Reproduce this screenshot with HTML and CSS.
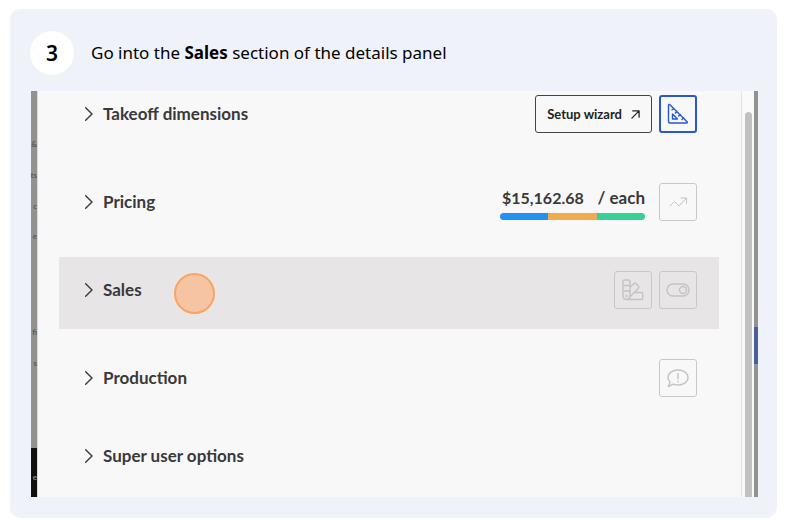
FILE: index.html
```html
<!DOCTYPE html>
<html lang="en">
<head>
<meta charset="utf-8">
<meta name="viewport" content="width=device-width, initial-scale=1">
<title>Step 3</title>
<link rel="stylesheet" href="styles.css">
</head>
<body>
<article class="step">
  <header class="step-head">
    <span class="step-number">3</span>
    <p class="step-text">Go into the <strong>Sales</strong> section of the details panel</p>
  </header>
  <div class="shot">
    <div class="backdrop-left">
      <span class="bit bit-1">&amp;</span>
      <span class="bit bit-2">ts</span>
      <span class="bit bit-3">c</span>
      <span class="bit bit-4">e</span>
      <span class="bit bit-5">fi</span>
      <span class="bit bit-6">s</span>
      <span class="bit bit-7">e</span>
    </div>
    <div class="panel">
      <section class="row">
        <button class="toggle"><svg class="chevron" viewBox="0 0 8 14"><path d="M.7.7 7 7 .7 13.3"/></svg>Takeoff dimensions</button>
        <div class="actions">
          <button class="wizard">Setup wizard <svg class="arrow" viewBox="0 0 10 10"><path d="M1 9 9 1M2 1h7v7"/></svg></button>
          <button class="icon-button active" aria-label="Dimensions">
            <svg viewBox="0 0 24 24"><path d="M2.500 3.800v15.400q0 1.800 1.800 1.800h15.900q2 0 .6-1.500L4.200 2.900Q2.500 1.500 2.500 3.800ZM6.500 12v5h5ZM7.600 6.200 6 7.800M11 9.300l-1.600 1.600M14.300 12.500l-1.600 1.600M17.600 15.800 16 17.400"/></svg>
          </button>
        </div>
      </section>
      <section class="row">
        <button class="toggle"><svg class="chevron" viewBox="0 0 8 14"><path d="M.7.7 7 7 .7 13.3"/></svg>Pricing</button>
        <div class="actions priced">
          <div class="price">
            <div class="price-text"><span>$15,162.68</span><span class="unit">/ each</span></div>
            <div class="price-bar"><i class="cost"></i><i class="markup"></i><i class="margin"></i></div>
          </div>
          <button class="icon-button" aria-label="Price trend">
            <svg class="thin" viewBox="0 0 24 24"><path d="m4 16 4.500-4.500 4.500 4.500 7.500-8M15 8h5.500v5.500"/></svg>
          </button>
        </div>
      </section>
      <section class="row selected">
        <button class="toggle"><svg class="chevron" viewBox="0 0 8 14"><path d="M.7.7 7 7 .7 13.3"/></svg>Sales</button>
        <span class="click-marker"></span>
        <div class="actions">
          <button class="icon-button" aria-label="Swatches">
            <svg viewBox="0 0 24 24"><path d="M3.500 2h4Q9 2 9 3.500v15Q9 21.500 5.700 21.500T2 18.500v-15Q2 2 3.500 2ZM2 7.500h7M2 13h7M9 9.200l3.700-3.500q1.200-1.200 2.400 0l2.200 2.200q1.200 1.200 0 2.400L6.500 21.400M13.800 14.500h6.400q1.500 0 1.500 1.500v4q0 1.500-1.500 1.500H5.700"/><circle cx="5.500" cy="18" r=".5"/></svg>
          </button>
          <button class="icon-button" aria-label="Visibility">
            <svg viewBox="0 0 24 24"><rect x="1" y="6" width="22" height="12" rx="6"/><circle cx="17" cy="12" r="3.500"/></svg>
          </button>
        </div>
      </section>
      <section class="row">
        <button class="toggle"><svg class="chevron" viewBox="0 0 8 14"><path d="M.7.7 7 7 .7 13.3"/></svg>Production</button>
        <div class="actions">
          <button class="icon-button" aria-label="Production notes">
            <svg viewBox="0 0 24 24"><path d="M12 4c5.500 0 10 3.300 10 7.500S17.500 19 12 19c-1.700 0-3.200-.3-4.600-.9L2.200 20.500l1.900-4.300C2.800 14.900 2 13.300 2 11.500 2 7.300 6.500 4 12 4ZM12 7.500v5.200M12 15.300v.700"/></svg>
          </button>
        </div>
      </section>
      <section class="row last">
        <button class="toggle"><svg class="chevron" viewBox="0 0 8 14"><path d="M.7.7 7 7 .7 13.3"/></svg>Super user options</button>
      </section>
    </div>
    <div class="scroll-track"><div class="scroll-thumb"></div></div>
    <div class="backdrop-right"></div>
  </div>
</article>
</body>
</html>
```
FILE: styles.css
```css
* {
  box-sizing: border-box;
}

body {
  margin: 9px 12px 2px 10px;
  background: #fff;
  font-family: "Noto Sans", sans-serif;
  color: #000;
}

button {
  margin: 0;
  padding: 0;
  border: 0;
  background: none;
  font: inherit;
  color: inherit;
}

svg {
  fill: none;
  stroke: currentColor;
  stroke-width: 1.4;
  stroke-linecap: round;
  stroke-linejoin: round;
}

.step {
  padding: 22px 19px 21px 21px;
  border-radius: 10px;
  background: #eff3f9;
}

.step-head {
  display: flex;
  align-items: center;
  gap: 17px;
  height: 44px;
  margin: 0 0 16px -1px;
}

.step-number {
  display: grid;
  place-items: center;
  width: 44px;
  height: 44px;
  border-radius: 50%;
  background: #fff;
  font-size: 21px;
  font-weight: 600;
  line-height: 24px;
}

.step-text {
  margin: 0;
  font-size: 17px;
  line-height: 24px;
}

.shot {
  display: flex;
  overflow: hidden;
  background: #f8f8f8;
  color: #39383b;
  font-family: Lato, sans-serif;
}

.backdrop-left {
  position: relative;
  flex: none;
  width: 7px;
  overflow: hidden;
  border-right: 1px solid #d9d9d6;
  background: linear-gradient(#93928f 357px, #101010 357px);
}

.bit {
  position: absolute;
  right: 0;
  font-size: 8px;
  font-weight: 700;
  line-height: 14px;
  color: #5c5b59;
}

.bit-1 { top: 46px; }
.bit-2 { top: 77px; }
.bit-3 { top: 108px; }
.bit-4 { top: 138px; }
.bit-5 { top: 234px; }
.bit-6 { top: 265px; }
.bit-7 { top: 379px; color: #8a8a8a; }

.panel {
  display: flex;
  flex: 1;
  flex-direction: column;
  gap: 16px;
  margin-top: -10px;
  padding: 0 22px 12px 21px;
}

.row {
  display: flex;
  align-items: center;
  min-height: 72px;
  padding: 0 22px 6px 26px;
}

.row.selected {
  background: #e7e5e6;
}

.row.last {
  min-height: 52px;
}

.toggle {
  display: flex;
  align-items: center;
  gap: 10px;
  font-size: 17px;
  font-weight: 700;
  line-height: 20px;
}

.chevron {
  width: 8px;
  height: 14px;
}

.actions {
  display: flex;
  align-items: center;
  gap: 7px;
  margin-left: auto;
}

.actions.priced {
  gap: 14px;
}

.wizard {
  display: flex;
  align-items: center;
  justify-content: center;
  gap: 9px;
  height: 38px;
  padding: 0 11px;
  border: 1px solid #444;
  border-radius: 3px;
  color: #222;
  font-size: 13px;
  font-weight: 700;
}

.arrow {
  width: 9px;
  height: 9px;
}

.icon-button {
  display: grid;
  place-items: center;
  width: 38px;
  height: 38px;
  border: 1px solid #c9c8c9;
  border-radius: 3px;
  color: #c5c3c4;
}

.icon-button svg {
  width: 24px;
  height: 24px;
}

.icon-button svg.thin {
  stroke-width: 1;
}

.icon-button.active {
  border: 2px solid #2a56d6;
  color: #2a56d6;
}

.price {
  display: grid;
  gap: 5px;
  min-width: 145px;
  padding-top: 4px;
}

.price-text {
  display: flex;
  justify-content: space-between;
  padding-left: 2px;
  font-size: 16px;
  font-weight: 700;
  line-height: 20px;
}

.unit {
  font-size: 17px;
}

.price-bar {
  display: flex;
  height: 7px;
  overflow: hidden;
  border-radius: 4px;
}

.price-bar i {
  flex: 1;
}

.cost { background: #2191f7; }
.markup { background: #efab4c; }
.margin { background: #36d098; }

.click-marker {
  width: 41px;
  height: 41px;
  margin: 7px 0 0 32px;
  border: 2px solid #fba35f;
  border-radius: 50%;
  background: #f7c4a3;
}

.scroll-track {
  flex: none;
  width: 13px;
  padding: 21px 2px 0 3px;
  border-left: 1px solid #e4e4e4;
  background: #fafafa;
}

.scroll-thumb {
  height: 100%;
  border-radius: 4px 4px 0 0;
  background: #c1c1c1;
}

.backdrop-right {
  flex: none;
  width: 4px;
  background: linear-gradient(#929292 236px, #4b5f9b 236px 273px, #929292 273px);
}
```
